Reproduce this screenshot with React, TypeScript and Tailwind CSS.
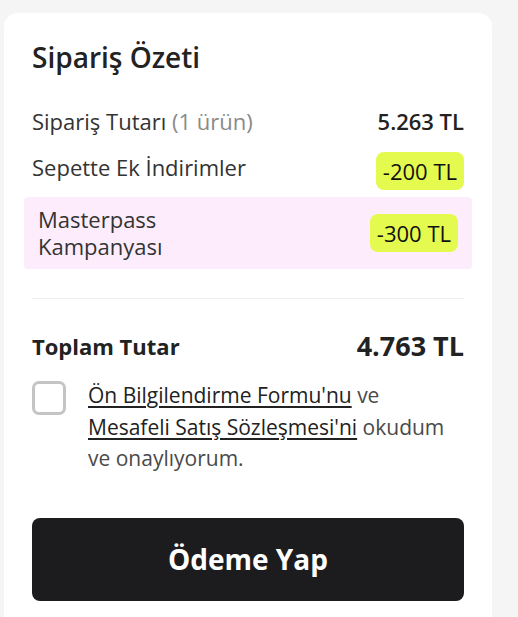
export default function App() {
  return (
    <div
      className="min-h-[617px] bg-[#f5f5f5] pt-[13px] pl-[4px]"
      style={{ fontFamily: '"Open Sans", "Noto Sans", sans-serif' }}
    >
      <div className="w-[488px] h-[620px] rounded-t-[14px] bg-white px-[28px] pt-[26px]">
        <h2 className="text-[28px] font-semibold leading-[36px] text-[#222]">Sipariş Özeti</h2>

        <div className="mt-[31px] flex items-center justify-between h-[30px]">
          <span className="text-[22px] text-[#333]">
            Sipariş Tutarı <span className="text-[#8a8a8a]">(1 ürün)</span>
          </span>
          <span className="text-[22px] font-semibold text-[#222]">5.263 TL</span>
        </div>

        <div className="mt-[16px] flex items-start justify-between">
          <span className="text-[22px] text-[#333] leading-[30px]">Sepette Ek İndirimler</span>
          <span className="rounded-[8px] bg-[#e4fa4e] px-[7px] py-[4px] text-[22px] font-medium leading-[30px] text-[#111]">
            -200 TL
          </span>
        </div>

        <div className="mt-[7px] -mx-[8px] flex items-center justify-between rounded-[4px] bg-[#fdedfc] pl-[14px] pr-[14px] py-[9px]">
          <span className="text-[22px] leading-[27px] text-[#333]">
            Masterpass
            <br />
            Kampanyası
          </span>
          <span className="rounded-[8px] bg-[#e4fa4e] px-[7px] py-[4px] text-[22px] font-medium leading-[30px] text-[#111]">
            -300 TL
          </span>
        </div>

        <div className="mt-[29px] h-px bg-[#efefef]" />

        <div className="mt-[29px] flex items-center justify-between h-[36px]">
          <span className="text-[22px] font-bold text-[#222]">Toplam Tutar</span>
          <span className="text-[27px] font-bold text-[#222]">4.763 TL</span>
        </div>

        <div className="mt-[17px] flex items-start gap-[22px]">
          <div className="h-[34px] w-[34px] shrink-0 rounded-[7px] border-[3px] border-[#c4c4c4] bg-white" />
          <p className="text-[21px] leading-[31.5px] text-[#4a4a4a] -mt-[1px]">
            <span className="underline decoration-[1.5px] underline-offset-[3px] text-[#222]">Ön Bilgilendirme Formu'nu</span> ve{' '}
            <span className="underline decoration-[1.5px] underline-offset-[3px] text-[#222]">Mesafeli Satış Sözleşmesi'ni</span> okudum ve
            onaylıyorum.
          </p>
        </div>

        <button className="mt-[43px] flex h-[83px] w-full items-center justify-center rounded-[8px] bg-[#1c1c1e] text-[28px] font-bold text-white">
          Ödeme Yap
        </button>
      </div>
    </div>
  )
}
